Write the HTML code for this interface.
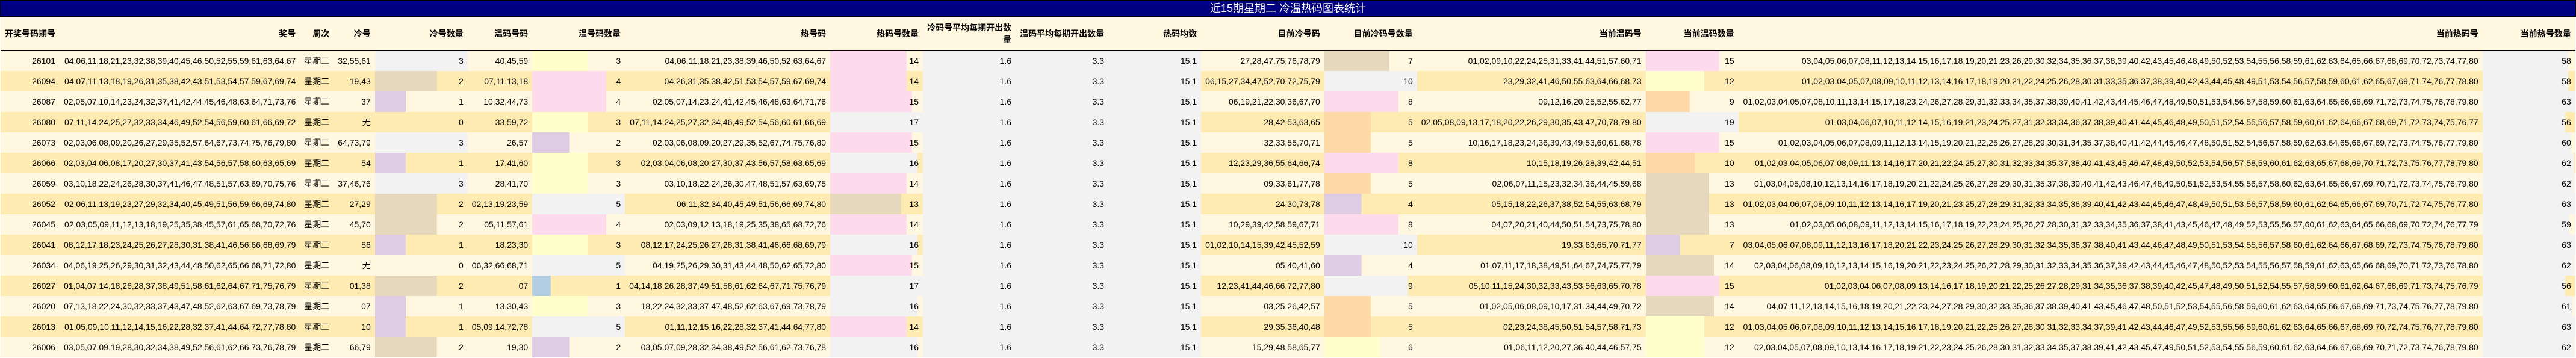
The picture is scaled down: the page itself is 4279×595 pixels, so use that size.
<!DOCTYPE html>
<html lang="zh">
<head>
<meta charset="utf-8">
<title>近15期星期二 冷温热码图表统计</title>
<style>
html,body{margin:0;padding:0;background:#fff;width:4279px;height:595px;overflow:hidden}
body{position:relative;font-family:"Liberation Sans","WenQuanYi Zen Hei","Noto Sans CJK SC",sans-serif;font-size:14px;line-height:20px;color:#000}
.t{position:absolute;left:0;top:0;width:4279px;height:28px;box-sizing:border-box;border:1px solid #000;background:#000080;color:#fff;font-size:18px;line-height:26px;text-align:center;white-space:pre}
table{position:absolute;left:1px;top:28px;width:4276.76px;table-layout:fixed;border-collapse:separate;border-spacing:0}
th,td{padding:7px;text-align:right;box-sizing:border-box;vertical-align:middle;overflow:visible}
td{white-space:nowrap;height:34px}
th{font-weight:bold;height:56px;background:#FFF7DF;border-bottom:1px solid #000;padding:8px 7px 7px}
tbody tr{background:#FFF7DF}
tbody tr.e{background:#FEEBB1}
td[class]{background-image:linear-gradient(var(--c),var(--c));background-size:var(--w) 100%;background-repeat:no-repeat}
.f{--c:#f2f2f2;--w:100%}
.a3{--c:#f2f2f2;--w:154px}.a2{--c:#e5d8bd;--w:102.67px}.a1{--c:#decbe4;--w:51.33px}
.b5{--c:#f2f2f2;--w:154px}.b4{--c:#fddaec;--w:123.2px}.b3{--c:#ffffcc;--w:92.4px}.b2{--c:#decbe4;--w:61.6px}.b1{--c:#b3cde3;--w:30.8px}
.h17{--c:#f2f2f2;--w:154px}.h16{--c:#f2f2f2;--w:144.94px}.h15{--c:#fddaec;--w:135.88px}.h14{--c:#fddaec;--w:126.82px}.h13{--c:#e5d8bd;--w:117.76px}
.m10{--c:#f2f2f2;--w:154px}.m9{--c:#f2f2f2;--w:138.6px}.m8{--c:#fddaec;--w:123.2px}.m7{--c:#e5d8bd;--w:107.8px}.m6{--c:#ffffcc;--w:92.4px}.m5{--c:#fed9a6;--w:77px}.m4{--c:#decbe4;--w:61.6px}
.w19{--c:#f2f2f2;--w:154px}.w15{--c:#fddaec;--w:121.58px}.w14{--c:#e5d8bd;--w:113.47px}.w13{--c:#e5d8bd;--w:105.37px}.w12{--c:#ffffcc;--w:97.26px}.w10{--c:#fed9a6;--w:81.05px}.w9{--c:#fed9a6;--w:72.95px}.w7{--c:#decbe4;--w:56.74px}
.z63{--c:#f2f2f2;--w:154px}.z62{--c:#f2f2f2;--w:151.56px}.z61{--c:#f2f2f2;--w:149.11px}.z60{--c:#f2f2f2;--w:146.67px}.z59{--c:#f2f2f2;--w:144.22px}.z58{--c:#f2f2f2;--w:141.78px}.z56{--c:#f2f2f2;--w:136.89px}
</style>
</head>
<body>
<div class="t">近15期星期二 冷温热码图表统计</div>
<table>
<colgroup>
<col style="width:98px"><col style="width:399.28px"><col style="width:56px"><col style="width:68.49px"><col style="width:154px"><col style="width:107.41px"><col style="width:154px"><col style="width:340.93px"><col style="width:154px"><col style="width:154px"><col style="width:154px"><col style="width:154px"><col style="width:204.71px"><col style="width:154px"><col style="width:379.85px"><col style="width:154px"><col style="width:1236.09px"><col style="width:154px">
</colgroup>
<thead>
<tr><th>开奖号码期号</th><th>奖号</th><th>周次</th><th>冷号</th><th>冷号数量</th><th>温码号码</th><th>温号码数量</th><th>热号码</th><th>热码号数量</th><th>冷码号平均每期开出数量</th><th>温码平均每期开出数量</th><th>热码均数</th><th>目前冷号码</th><th>目前冷码号数量</th><th>当前温码号</th><th>当前温码数量</th><th>当前热码号</th><th>当前热号数量</th></tr>
</thead>
<tbody>
<tr><td>26101</td><td>04,06,11,18,21,23,32,38,39,40,45,46,50,52,55,59,61,63,64,67</td><td>星期二</td><td>32,55,61</td><td class="a3">3</td><td>40,45,59</td><td class="b3">3</td><td>04,06,11,18,21,23,38,39,46,50,52,63,64,67</td><td class="h14">14</td><td class="f">1.6</td><td class="f">3.3</td><td class="f">15.1</td><td>27,28,47,75,76,78,79</td><td class="m7">7</td><td>01,02,09,10,22,24,25,31,33,41,44,51,57,60,71</td><td class="w15">15</td><td>03,04,05,06,07,08,11,12,13,14,15,16,17,18,19,20,21,23,26,29,30,32,34,35,36,37,38,39,40,42,43,45,46,48,49,50,52,53,54,55,56,58,59,61,62,63,64,65,66,67,68,69,70,72,73,74,77,80</td><td class="z58">58</td></tr>
<tr class="e"><td>26094</td><td>04,07,11,13,18,19,26,31,35,38,42,43,51,53,54,57,59,67,69,74</td><td>星期二</td><td>19,43</td><td class="a2">2</td><td>07,11,13,18</td><td class="b4">4</td><td>04,26,31,35,38,42,51,53,54,57,59,67,69,74</td><td class="h14">14</td><td class="f">1.6</td><td class="f">3.3</td><td class="f">15.1</td><td>06,15,27,34,47,52,70,72,75,79</td><td class="m10">10</td><td>23,29,32,41,46,50,55,63,64,66,68,73</td><td class="w12">12</td><td>01,02,03,04,05,07,08,09,10,11,12,13,14,16,17,18,19,20,21,22,24,25,26,28,30,31,33,35,36,37,38,39,40,42,43,44,45,48,49,51,53,54,56,57,58,59,60,61,62,65,67,69,71,74,76,77,78,80</td><td class="z58">58</td></tr>
<tr><td>26087</td><td>02,05,07,10,14,23,24,32,37,41,42,44,45,46,48,63,64,71,73,76</td><td>星期二</td><td>37</td><td class="a1">1</td><td>10,32,44,73</td><td class="b4">4</td><td>02,05,07,14,23,24,41,42,45,46,48,63,64,71,76</td><td class="h15">15</td><td class="f">1.6</td><td class="f">3.3</td><td class="f">15.1</td><td>06,19,21,22,30,36,67,70</td><td class="m8">8</td><td>09,12,16,20,25,52,55,62,77</td><td class="w9">9</td><td>01,02,03,04,05,07,08,10,11,13,14,15,17,18,23,24,26,27,28,29,31,32,33,34,35,37,38,39,40,41,42,43,44,45,46,47,48,49,50,51,53,54,56,57,58,59,60,61,63,64,65,66,68,69,71,72,73,74,75,76,78,79,80</td><td class="z63">63</td></tr>
<tr class="e"><td>26080</td><td>07,11,14,24,25,27,32,33,34,46,49,52,54,56,59,60,61,66,69,72</td><td>星期二</td><td>无</td><td>0</td><td>33,59,72</td><td class="b3">3</td><td>07,11,14,24,25,27,32,34,46,49,52,54,56,60,61,66,69</td><td class="h17">17</td><td class="f">1.6</td><td class="f">3.3</td><td class="f">15.1</td><td>28,42,53,63,65</td><td class="m5">5</td><td>02,05,08,09,13,17,18,20,22,26,29,30,35,43,47,70,78,79,80</td><td class="w19">19</td><td>01,03,04,06,07,10,11,12,14,15,16,19,21,23,24,25,27,31,32,33,34,36,37,38,39,40,41,44,45,46,48,49,50,51,52,54,55,56,57,58,59,60,61,62,64,66,67,68,69,71,72,73,74,75,76,77</td><td class="z56">56</td></tr>
<tr><td>26073</td><td>02,03,06,08,09,20,26,27,29,35,52,57,64,67,73,74,75,76,79,80</td><td>星期二</td><td>64,73,79</td><td class="a3">3</td><td>26,57</td><td class="b2">2</td><td>02,03,06,08,09,20,27,29,35,52,67,74,75,76,80</td><td class="h15">15</td><td class="f">1.6</td><td class="f">3.3</td><td class="f">15.1</td><td>32,33,55,70,71</td><td class="m5">5</td><td>10,16,17,18,23,24,36,39,43,49,53,60,61,68,78</td><td class="w15">15</td><td>01,02,03,04,05,06,07,08,09,11,12,13,14,15,19,20,21,22,25,26,27,28,29,30,31,34,35,37,38,40,41,42,44,45,46,47,48,50,51,52,54,56,57,58,59,62,63,64,65,66,67,69,72,73,74,75,76,77,79,80</td><td class="z60">60</td></tr>
<tr class="e"><td>26066</td><td>02,03,04,06,08,17,20,27,30,37,41,43,54,56,57,58,60,63,65,69</td><td>星期二</td><td>54</td><td class="a1">1</td><td>17,41,60</td><td class="b3">3</td><td>02,03,04,06,08,20,27,30,37,43,56,57,58,63,65,69</td><td class="h16">16</td><td class="f">1.6</td><td class="f">3.3</td><td class="f">15.1</td><td>12,23,29,36,55,64,66,74</td><td class="m8">8</td><td>10,15,18,19,26,28,39,42,44,51</td><td class="w10">10</td><td>01,02,03,04,05,06,07,08,09,11,13,14,16,17,20,21,22,24,25,27,30,31,32,33,34,35,37,38,40,41,43,45,46,47,48,49,50,52,53,54,56,57,58,59,60,61,62,63,65,67,68,69,70,71,72,73,75,76,77,78,79,80</td><td class="z62">62</td></tr>
<tr><td>26059</td><td>03,10,18,22,24,26,28,30,37,41,46,47,48,51,57,63,69,70,75,76</td><td>星期二</td><td>37,46,76</td><td class="a3">3</td><td>28,41,70</td><td class="b3">3</td><td>03,10,18,22,24,26,30,47,48,51,57,63,69,75</td><td class="h14">14</td><td class="f">1.6</td><td class="f">3.3</td><td class="f">15.1</td><td>09,33,61,77,78</td><td class="m5">5</td><td>02,06,07,11,15,23,32,34,36,44,45,59,68</td><td class="w13">13</td><td>01,03,04,05,08,10,12,13,14,16,17,18,19,20,21,22,24,25,26,27,28,29,30,31,35,37,38,39,40,41,42,43,46,47,48,49,50,51,52,53,54,55,56,57,58,60,62,63,64,65,66,67,69,70,71,72,73,74,75,76,79,80</td><td class="z62">62</td></tr>
<tr class="e"><td>26052</td><td>02,06,11,13,19,23,27,29,32,34,40,45,49,51,56,59,66,69,74,80</td><td>星期二</td><td>27,29</td><td class="a2">2</td><td>02,13,19,23,59</td><td class="b5">5</td><td>06,11,32,34,40,45,49,51,56,66,69,74,80</td><td class="h13">13</td><td class="f">1.6</td><td class="f">3.3</td><td class="f">15.1</td><td>24,30,73,78</td><td class="m4">4</td><td>05,15,18,22,26,37,38,52,54,55,63,68,79</td><td class="w13">13</td><td>01,02,03,04,06,07,08,09,10,11,12,13,14,16,17,19,20,21,23,25,27,28,29,31,32,33,34,35,36,39,40,41,42,43,44,45,46,47,48,49,50,51,53,56,57,58,59,60,61,62,64,65,66,67,69,70,71,72,74,75,76,77,80</td><td class="z63">63</td></tr>
<tr><td>26045</td><td>02,03,05,09,11,12,13,18,19,25,35,38,45,57,61,65,68,70,72,76</td><td>星期二</td><td>45,70</td><td class="a2">2</td><td>05,11,57,61</td><td class="b4">4</td><td>02,03,09,12,13,18,19,25,35,38,65,68,72,76</td><td class="h14">14</td><td class="f">1.6</td><td class="f">3.3</td><td class="f">15.1</td><td>10,29,39,42,58,59,67,71</td><td class="m8">8</td><td>04,07,20,21,40,44,50,51,54,73,75,78,80</td><td class="w13">13</td><td>01,02,03,05,06,08,09,11,12,13,14,15,16,17,18,19,22,23,24,25,26,27,28,30,31,32,33,34,35,36,37,38,41,43,45,46,47,48,49,52,53,55,56,57,60,61,62,63,64,65,66,68,69,70,72,74,76,77,79</td><td class="z59">59</td></tr>
<tr class="e"><td>26041</td><td>08,12,17,18,23,24,25,26,27,28,30,31,38,41,46,56,66,68,69,79</td><td>星期二</td><td>56</td><td class="a1">1</td><td>18,23,30</td><td class="b3">3</td><td>08,12,17,24,25,26,27,28,31,38,41,46,66,68,69,79</td><td class="h16">16</td><td class="f">1.6</td><td class="f">3.3</td><td class="f">15.1</td><td>01,02,10,14,15,39,42,45,52,59</td><td class="m10">10</td><td>19,33,63,65,70,71,77</td><td class="w7">7</td><td>03,04,05,06,07,08,09,11,12,13,16,17,18,20,21,22,23,24,25,26,27,28,29,30,31,32,34,35,36,37,38,40,41,43,44,46,47,48,49,50,51,53,54,55,56,57,58,60,61,62,64,66,67,68,69,72,73,74,75,76,78,79,80</td><td class="z63">63</td></tr>
<tr><td>26034</td><td>04,06,19,25,26,29,30,31,32,43,44,48,50,62,65,66,68,71,72,80</td><td>星期二</td><td>无</td><td>0</td><td>06,32,66,68,71</td><td class="b5">5</td><td>04,19,25,26,29,30,31,43,44,48,50,62,65,72,80</td><td class="h15">15</td><td class="f">1.6</td><td class="f">3.3</td><td class="f">15.1</td><td>05,40,41,60</td><td class="m4">4</td><td>01,07,11,17,18,38,49,51,64,67,74,75,77,79</td><td class="w14">14</td><td>02,03,04,06,08,09,10,12,13,14,15,16,19,20,21,22,23,24,25,26,27,28,29,30,31,32,33,34,35,36,37,39,42,43,44,45,46,47,48,50,52,53,54,55,56,57,58,59,61,62,63,65,66,68,69,70,71,72,73,76,78,80</td><td class="z62">62</td></tr>
<tr class="e"><td>26027</td><td>01,04,07,14,18,26,28,37,38,49,51,58,61,62,64,67,71,75,76,79</td><td>星期二</td><td>01,38</td><td class="a2">2</td><td>07</td><td class="b1">1</td><td>04,14,18,26,28,37,49,51,58,61,62,64,67,71,75,76,79</td><td class="h17">17</td><td class="f">1.6</td><td class="f">3.3</td><td class="f">15.1</td><td>12,23,41,44,46,66,72,77,80</td><td class="m9">9</td><td>05,10,11,15,24,30,32,33,43,53,56,63,65,70,78</td><td class="w15">15</td><td>01,02,03,04,06,07,08,09,13,14,16,17,18,19,20,21,22,25,26,27,28,29,31,34,35,36,37,38,39,40,42,45,47,48,49,50,51,52,54,55,57,58,59,60,61,62,64,67,68,69,71,73,74,75,76,79</td><td class="z56">56</td></tr>
<tr><td>26020</td><td>07,13,18,22,24,30,32,33,37,43,47,48,52,62,63,67,69,73,78,79</td><td>星期二</td><td>07</td><td class="a1">1</td><td>13,30,43</td><td class="b3">3</td><td>18,22,24,32,33,37,47,48,52,62,63,67,69,73,78,79</td><td class="h16">16</td><td class="f">1.6</td><td class="f">3.3</td><td class="f">15.1</td><td>03,25,26,42,57</td><td class="m5">5</td><td>01,02,05,06,08,09,10,17,31,34,44,49,70,72</td><td class="w14">14</td><td>04,07,11,12,13,14,15,16,18,19,20,21,22,23,24,27,28,29,30,32,33,35,36,37,38,39,40,41,43,45,46,47,48,50,51,52,53,54,55,56,58,59,60,61,62,63,64,65,66,67,68,69,71,73,74,75,76,77,78,79,80</td><td class="z61">61</td></tr>
<tr class="e"><td>26013</td><td>01,05,09,10,11,12,14,15,16,22,28,32,37,41,44,64,72,77,78,80</td><td>星期二</td><td>10</td><td class="a1">1</td><td>05,09,14,72,78</td><td class="b5">5</td><td>01,11,12,15,16,22,28,32,37,41,44,64,77,80</td><td class="h14">14</td><td class="f">1.6</td><td class="f">3.3</td><td class="f">15.1</td><td>29,35,36,40,48</td><td class="m5">5</td><td>02,23,24,38,45,50,51,54,57,58,71,73</td><td class="w12">12</td><td>01,03,04,05,06,07,08,09,10,11,12,13,14,15,16,17,18,19,20,21,22,25,26,27,28,30,31,32,33,34,37,39,41,42,43,44,46,47,49,52,53,55,56,59,60,61,62,63,64,65,66,67,68,69,70,72,74,75,76,77,78,79,80</td><td class="z63">63</td></tr>
<tr><td>26006</td><td>03,05,07,09,19,28,30,32,34,38,49,52,56,61,62,66,73,76,78,79</td><td>星期二</td><td>66,79</td><td class="a2">2</td><td>19,30</td><td class="b2">2</td><td>03,05,07,09,28,32,34,38,49,52,56,61,62,73,76,78</td><td class="h16">16</td><td class="f">1.6</td><td class="f">3.3</td><td class="f">15.1</td><td>15,29,48,58,65,77</td><td class="m6">6</td><td>01,06,11,12,20,27,36,40,44,46,57,75</td><td class="w12">12</td><td>02,03,04,05,07,08,09,10,13,14,16,17,18,19,21,22,23,24,25,26,28,30,31,32,33,34,35,37,38,39,41,42,43,45,47,49,50,51,52,53,54,55,56,59,60,61,62,63,64,66,67,68,69,70,71,72,73,74,76,78,79,80</td><td class="z62">62</td></tr>
</tbody>
</table>
</body>
</html>
